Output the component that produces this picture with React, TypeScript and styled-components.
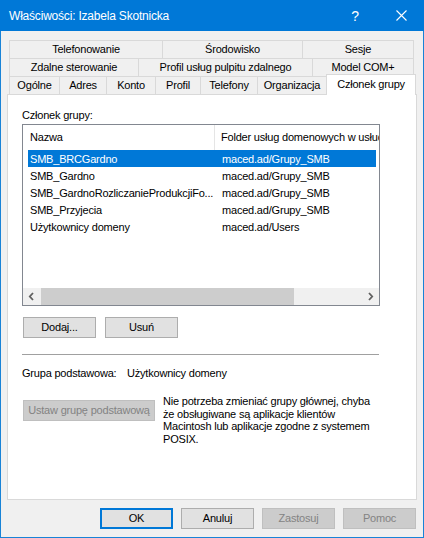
import { FC } from "react";
import styled, { createGlobalStyle } from "styled-components";

const GlobalStyle = createGlobalStyle`
  html, body {
    margin: 0;
    padding: 0;
    background: #ffffff;
  }
  body {
    font-family: "Liberation Sans", Arial, sans-serif;
    font-size: 11px;
    letter-spacing: -0.2px;
    color: #000000;
  }
  * {
    box-sizing: border-box;
  }
`;

const Window = styled.div`
  width: 424px;
  height: 538px;
  display: flex;
  flex-direction: column;
  background: #f0f0f0;
  border: 1px solid #1883d7;
  border-top: none;
`;

const TitleBar = styled.div`
  height: 31px;
  margin: 0 -1px;
  display: flex;
  align-items: center;
  background: #0078d7;
  color: #ffffff;
  padding-left: 9px;
`;

const TitleText = styled.div`
  flex: 1;
  font-size: 12px;
`;

const TitleButton = styled.div`
  width: 46px;
  height: 31px;
  display: flex;
  align-items: center;
  justify-content: center;
  font-size: 14px;
`;

const Body = styled.div`
  flex: 1;
  display: flex;
  flex-direction: column;
  padding: 9px 6px 0 6px;
`;

const TabRow = styled.div`
  display: flex;
  height: 18px;
  margin-left: 2px;
`;

const Tab = styled.div<{ $w: number; $last?: boolean }>`
  width: ${(p) => p.$w}px;
  height: 18px;
  border-top: 1px solid #d9d9d9;
  border-left: 1px solid #d9d9d9;
  border-right: ${(p) => (p.$last ? "1px solid #d9d9d9" : "none")};
  background: #f0f0f0;
  display: flex;
  align-items: center;
  justify-content: center;
  white-space: nowrap;
  padding-bottom: 1px;
`;

const ActiveTab = styled.div<{ $w: number }>`
  position: relative;
  z-index: 1;
  width: ${(p) => p.$w}px;
  height: 21px;
  margin-top: -2px;
  border: 1px solid #d9d9d9;
  border-bottom: none;
  background: #ffffff;
  display: flex;
  align-items: center;
  justify-content: center;
  white-space: nowrap;
  padding-bottom: 3px;
`;

const Panel = styled.div`
  width: 410px;
  height: 406px;
  background: #ffffff;
  border: 1px solid #d9d9d9;
  display: flex;
  flex-direction: column;
  padding: 13px 0 0 14px;
`;

const Label = styled.div`
  line-height: 15px;
  height: 16px;
`;

const ListBox = styled.div`
  width: 358px;
  height: 182px;
  border: 1px solid #828790;
  background: #ffffff;
  display: flex;
  flex-direction: column;
  overflow: hidden;
`;

const Header = styled.div`
  height: 25px;
  display: flex;
  flex-shrink: 0;
`;

const HeaderCell = styled.div<{ $w?: number }>`
  width: ${(p) => (p.$w ? `${p.$w}px` : "auto")};
  flex: ${(p) => (p.$w ? "none" : 1)};
  display: flex;
  align-items: center;
  padding-left: ${(p) => (p.$w ? 7 : 6)}px;
  border-right: ${(p) => (p.$w ? "1px solid #e5e5e5" : "none")};
  white-space: nowrap;
  overflow: hidden;
  padding-bottom: 1px;
`;

const Rows = styled.div`
  flex: 1;
  padding-left: 5px;
`;

const Row = styled.div<{ $selected?: boolean }>`
  width: 348px;
  height: 17px;
  display: flex;
  align-items: center;
  background: ${(p) => (p.$selected ? "#0078d7" : "transparent")};
  color: ${(p) => (p.$selected ? "#ffffff" : "#000000")};
`;

const Cell = styled.div<{ $w?: number }>`
  width: ${(p) => (p.$w ? `${p.$w}px` : "auto")};
  flex: ${(p) => (p.$w ? "none" : 1)};
  padding-left: 2px;
  white-space: nowrap;
  overflow: hidden;
`;

const ScrollBar = styled.div`
  height: 17px;
  display: flex;
  background: #f0f0f0;
  flex-shrink: 0;
`;

const ScrollArrow = styled.div`
  width: 17px;
  height: 17px;
  display: flex;
  align-items: center;
  justify-content: center;
`;

const ScrollTrack = styled.div`
  flex: 1;
  display: flex;
  align-items: stretch;
  padding-left: 1px;
`;

const ScrollThumb = styled.div<{ $w: number }>`
  width: ${(p) => p.$w}px;
  background: #cdcdcd;
`;

const ButtonRow = styled.div`
  display: flex;
  gap: 9px;
  margin: 11px 0 0 1px;
`;

const Button = styled.div<{ $w?: number; $disabled?: boolean; $default?: boolean }>`
  width: ${(p) => p.$w ?? 73}px;
  height: 21px;
  display: flex;
  align-items: center;
  justify-content: center;
  background: ${(p) => (p.$disabled ? "#cccccc" : "#e1e1e1")};
  border: ${(p) =>
    p.$default ? "2px solid #0078d7" : p.$disabled ? "1px solid #bfbfbf" : "1px solid #adadad"};
  color: ${(p) => (p.$disabled ? "#838383" : "#000000")};
  white-space: nowrap;
  padding-bottom: 1px;
`;

const Separator = styled.div`
  width: 357px;
  height: 1px;
  background: #a0a0a0;
  margin-top: 16px;
`;

const PrimaryRow = styled.div`
  display: flex;
  line-height: 15px;
  margin-top: 11px;
  white-space: nowrap;
`;

const PrimaryLabel = styled.div`
  width: 105px;
`;

const SetRow = styled.div`
  display: flex;
  align-items: flex-start;
  margin-top: 14px;
`;

const SetButtonWrap = styled.div`
  margin: 5px 0 0 1px;
`;

const Description = styled.div`
  margin-left: 8px;
  line-height: 12.7px;
  white-space: nowrap;
`;

const Footer = styled.div`
  display: flex;
  justify-content: flex-end;
  gap: 8px;
  padding: 8px 1px 0 0;
`;

const CloseIcon = () => (
  <svg width="11" height="11" viewBox="0 0 11 11">
    <path d="M0.5 0.5 L10.5 10.5 M10.5 0.5 L0.5 10.5" stroke="#ffffff" strokeWidth="1.1" />
  </svg>
);

const Chevron: FC<{ dir: "left" | "right" }> = ({ dir }) => (
  <svg width="7" height="9" viewBox="0 0 7 9">
    <path
      d={dir === "left" ? "M5 1 L1.8 4.5 L5 8" : "M2 1 L5.2 4.5 L2 8"}
      stroke="#606060"
      strokeWidth="1.8"
      fill="none"
    />
  </svg>
);

const tabRows = [
  [
    { label: "Telefonowanie", w: 153 },
    { label: "Środowisko", w: 140 },
    { label: "Sesje", w: 112 },
  ],
  [
    { label: "Zdalne sterowanie", w: 129 },
    { label: "Profil usług pulpitu zdalnego", w: 174 },
    { label: "Model COM+", w: 102 },
  ],
];

const bottomTabs = [
  { label: "Ogólne", w: 50 },
  { label: "Adres", w: 47 },
  { label: "Konto", w: 49 },
  { label: "Profil", w: 45 },
  { label: "Telefony", w: 57 },
  { label: "Organizacja", w: 69 },
];

const groups = [
  { name: "SMB_BRCGardno", folder: "maced.ad/Grupy_SMB" },
  { name: "SMB_Gardno", folder: "maced.ad/Grupy_SMB" },
  { name: "SMB_GardnoRozliczanieProdukcjiFo...", folder: "maced.ad/Grupy_SMB" },
  { name: "SMB_Przyjecia", folder: "maced.ad/Grupy_SMB" },
  { name: "Użytkownicy domeny", folder: "maced.ad/Users" },
];

const App: FC = () => {
  return (
    <>
      <GlobalStyle />
      <Window>
        <TitleBar>
          <TitleText>Właściwości: Izabela Skotnicka</TitleText>
          <TitleButton>?</TitleButton>
          <TitleButton>
            <CloseIcon />
          </TitleButton>
        </TitleBar>
        <Body>
          {tabRows.map((row, i) => (
            <TabRow key={i}>
              {row.map((t, j) => (
                <Tab key={t.label} $w={t.w} $last={j === row.length - 1}>
                  {t.label}
                </Tab>
              ))}
            </TabRow>
          ))}
          <TabRow>
            {bottomTabs.map((t) => (
              <Tab key={t.label} $w={t.w}>
                {t.label}
              </Tab>
            ))}
            <ActiveTab $w={90}>Członek grupy</ActiveTab>
          </TabRow>
          <Panel>
            <Label>Członek grupy:</Label>
            <ListBox>
              <Header>
                <HeaderCell $w={192}>Nazwa</HeaderCell>
                <HeaderCell>Folder usług domenowych w usłudze Active Directory</HeaderCell>
              </Header>
              <Rows>
                {groups.map((g, i) => (
                  <Row key={g.name} $selected={i === 0}>
                    <Cell $w={192}>{g.name}</Cell>
                    <Cell>{g.folder}</Cell>
                  </Row>
                ))}
              </Rows>
              <ScrollBar>
                <ScrollArrow>
                  <Chevron dir="left" />
                </ScrollArrow>
                <ScrollTrack>
                  <ScrollThumb $w={253} />
                </ScrollTrack>
                <ScrollArrow>
                  <Chevron dir="right" />
                </ScrollArrow>
              </ScrollBar>
            </ListBox>
            <ButtonRow>
              <Button>Dodaj...</Button>
              <Button>Usuń</Button>
            </ButtonRow>
            <Separator />
            <PrimaryRow>
              <PrimaryLabel>Grupa podstawowa:</PrimaryLabel>
              <div>Użytkownicy domeny</div>
            </PrimaryRow>
            <SetRow>
              <SetButtonWrap>
                <Button $w={132} $disabled>
                  Ustaw grupę podstawową
                </Button>
              </SetButtonWrap>
              <Description>
                Nie potrzeba zmieniać grupy głównej, chyba
                <br />
                że obsługiwane są aplikacje klientów
                <br />
                Macintosh lub aplikacje zgodne z systemem
                <br />
                POSIX.
              </Description>
            </SetRow>
          </Panel>
          <Footer>
            <Button $default>OK</Button>
            <Button>Anuluj</Button>
            <Button $disabled>Zastosuj</Button>
            <Button $disabled>Pomoc</Button>
          </Footer>
        </Body>
      </Window>
    </>
  );
};

export default App;
